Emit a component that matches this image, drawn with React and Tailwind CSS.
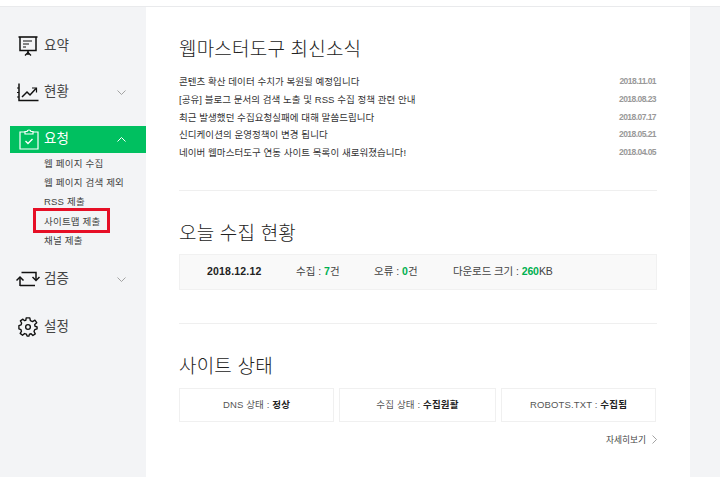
const FONT = "font-['Liberation_Sans','Noto_Sans_CJK_KR',sans-serif]"

const news = [
  ['콘텐츠 확산 데이터 수치가 복원될 예정입니다', '2018.11.01'],
  ['[공유] 블로그 문서의 검색 노출 및 RSS 수집 정책 관련 안내', '2018.08.23'],
  ['최근 발생했던 수집요청실패에 대해 말씀드립니다', '2018.07.17'],
  ['신디케이션의 운영정책이 변경 됩니다', '2018.05.21'],
  ['네이버 웹마스터도구 연동 사이트 목록이 새로워졌습니다!', '2018.04.05'],
]

const ChevronDown = () => (
  <svg width="9" height="5" viewBox="0 0 9 5" fill="none" stroke="#9a9a9a" strokeWidth="0.9"><path d="M0.5 0.5 L4.5 4.5 L8.5 0.5" /></svg>
)

const ChevronUp = () => (
  <svg width="9" height="5" viewBox="0 0 9 5" fill="none" stroke="#fff" strokeWidth="1"><path d="M0.5 4.5 L4.5 0.5 L8.5 4.5" /></svg>
)

const BoardIcon = () => (
  <svg width="20" height="22" viewBox="0 0 20 22" fill="none" stroke="#111" strokeWidth="1.5">
    <path d="M0.5 2 H19.5" strokeWidth="1.6" />
    <path d="M2 2 V15.5 H18 V2" />
    <path d="M5 6 H14 M5 9 H11 M5 12 H8" strokeWidth="1.1" />
    <path d="M10 15.5 V20" />
    <path d="M7 20.5 L10 17.5 L13 20.5" strokeWidth="1.3" />
  </svg>
)

const ChartIcon = () => (
  <svg width="22" height="19" viewBox="0 0 22 19" fill="none" stroke="#111" strokeWidth="1.5">
    <path d="M2 0.5 V17.5 H21.5" />
    <path d="M0 5 H2 M0 9.5 H2 M0 14 H2" strokeWidth="1" />
    <path d="M5 14 L10 9 L13 12 L19 5.5" />
    <path d="M15 5 H19.5 V9.5" strokeWidth="1.2" />
  </svg>
)

const ClipboardIcon = () => (
  <svg width="20" height="21" viewBox="0 0 20 21" fill="none" stroke="#fff" strokeWidth="1.2">
    <path d="M6 3 H1 V20 H19 V3 H14" />
    <path d="M6 5 V2.5 H8 C8.5 0.5 11.5 0.5 12 2.5 H14 V5 Z" />
    <path d="M6.5 12 L9 14.5 L13.5 10" strokeWidth="1.4" />
  </svg>
)

const SwapIcon = () => (
  <svg width="24" height="16" viewBox="0 0 24 16" fill="none" stroke="#111" strokeWidth="1.5">
    <path d="M4 15 V7" />
    <path d="M4 14.5 H19" />
    <path d="M0.5 9.5 L4 6 L7.5 9.5" />
    <path d="M5.5 1.5 H20 V9" />
    <path d="M16.5 6 L20 9.5 L23.5 6" />
  </svg>
)

const GearIcon = () => (
  <svg width="20" height="20" viewBox="0 0 22 22" fill="none" stroke="#111" strokeWidth="1.5">
    <path d="M9 1 H13 L13.6 4 L16 5 L18.6 3.4 L20.6 6.2 L18.4 8.2 L18.6 10 L21 11 L21 13 L18.4 14 L17.6 16 L19 18.6 L16.4 20.4 L14.4 18.4 L12.6 18.8 L12 21 H10 L9.2 18.8 L7.2 18.2 L5 20 L2.4 18 L3.8 15.8 L3.2 13.8 L1 13 V9.4 L3.4 8.6 L4 6.6 L2.6 4.2 L5.4 2.4 L7 4 L8.6 3.6 Z" strokeLinejoin="round" />
    <circle cx="11" cy="11" r="2.6" />
  </svg>
)

const NavItem = ({ icon, label, chevron, className, iconClass }) => (
  <div className={`flex items-center h-7 ${className}`}>
    <div className={`w-[34px] flex justify-start shrink-0 ${iconClass}`}>{icon}</div>
    <span className="text-[13.5px] text-[#444]">{label}</span>
    {chevron && <div className="ml-auto mr-[20px] flex"><ChevronDown /></div>}
  </div>
)

const Heading = ({ className, children }) => (
  <h2 className={`text-[19px] leading-[28px] text-[#222] font-light tracking-[0.2px] ${className}`}>{children}</h2>
)

export default function App() {
  return (
    <div className={`w-[720px] h-[477px] overflow-hidden flex flex-col bg-[#f3f4f6] ${FONT}`}>
      <div className="h-[7px] bg-white border-b border-[#e9eaec] shrink-0" />
      <div className="flex flex-1 min-h-0">
        <aside className="w-[146px] shrink-0 pl-[10px] pt-[25px]">
          <NavItem icon={<BoardIcon />} label="요약" iconClass="pl-[8px]" />
          <NavItem icon={<ChartIcon />} label="현황" chevron className="mt-[18px]" iconClass="pl-[7px]" />
          <div className="mt-[20px] h-[27px] bg-[#00c060] flex items-center">
            <div className="w-[34px] pl-[9px] shrink-0"><ClipboardIcon /></div>
            <span className="text-[13.5px] text-white">요청</span>
            <div className="ml-auto mr-[20px] flex"><ChevronUp /></div>
          </div>
          <ul className="mt-[1px] text-[9.5px] text-[#444] leading-[19.2px] tracking-[0.2px]">
            <li className="pl-[34px]">웹 페이지 수집</li>
            <li className="pl-[34px]">웹 페이지 검색 제외</li>
            <li className="pl-[34px]">RSS 제출</li>
            <li className="relative pl-[34px]">
              사이트맵 제출
              <div className="absolute left-[23px] top-[-4px] w-[77px] h-[25px] border-[3px] border-[#e60f26]" />
            </li>
            <li className="pl-[34px]">채널 제출</li>
          </ul>
          <NavItem icon={<SwapIcon />} label="검증" chevron className="mt-[15px]" iconClass="pl-[6px]" />
          <NavItem icon={<GearIcon />} label="설정" className="mt-[20px]" iconClass="pl-[8px]" />
        </aside>

        <main className="w-[544px] shrink-0 bg-white pl-[33px] pr-[33px] pt-[27px]">
          <Heading className="mt-[2px]">웹마스터도구 최신소식</Heading>
          <ul className="mt-[9px] text-[9.5px] text-[#333] leading-[17.75px]">
            {news.map(([title, date]) => (
              <li key={date} className="flex justify-between">
                <span className="tracking-[0.05px]">{title}</span>
                <span className="text-[#999] text-[8.5px] tracking-[-0.55px] font-bold mr-[1px]">{date}</span>
              </li>
            ))}
          </ul>
          <div className="mt-[28px] border-t border-[#efefef]" />

          <Heading className="mt-[29px]">오늘 수집 현황</Heading>
          <div className="mt-[6px] h-[36px] bg-[#f9f9f9] border border-[#f1f1f1] flex items-center text-[10.5px] text-[#444]">
            <span className="ml-[27px] w-[89px] font-bold text-[#222] tracking-[0.2px]">2018.12.12</span>
            <span className="w-[78px]">수집 : <b className="text-[#00b050]">7</b>건</span>
            <span className="w-[79px]">오류 : <b className="text-[#00b050]">0</b>건</span>
            <span className="tracking-[-0.1px]">다운로드 크기 : <b className="text-[#00b050]">260</b>KB</span>
          </div>
          <div className="mt-[33px] border-t border-[#efefef]" />

          <Heading className="mt-[29px]">사이트 상태</Heading>
          <div className="mt-[7px] flex gap-[5px] text-[9.5px] text-[#555] tracking-[0.15px]">
            <div className="w-[155px] h-[34px] border border-[#f0f0f0] flex items-center justify-center">DNS 상태 :&nbsp;<b className="text-[#222]">정상</b></div>
            <div className="w-[157px] h-[34px] border border-[#f0f0f0] flex items-center justify-center">수집 상태 :&nbsp;<b className="text-[#222]">수집원활</b></div>
            <div className="w-[155px] h-[34px] border border-[#f0f0f0] flex items-center justify-center">ROBOTS.TXT :&nbsp;<b className="text-[#222]">수집됨</b></div>
          </div>
          <div className="mt-[11px] flex justify-end items-center gap-[6px] text-[8.7px] text-[#444] leading-[14px]">
            자세히보기
            <svg width="5" height="9" viewBox="0 0 5 9" fill="none" stroke="#999" strokeWidth="0.9"><path d="M0.5 0.5 L4.5 4.5 L0.5 8.5" /></svg>
          </div>
        </main>
      </div>
    </div>
  )
}
